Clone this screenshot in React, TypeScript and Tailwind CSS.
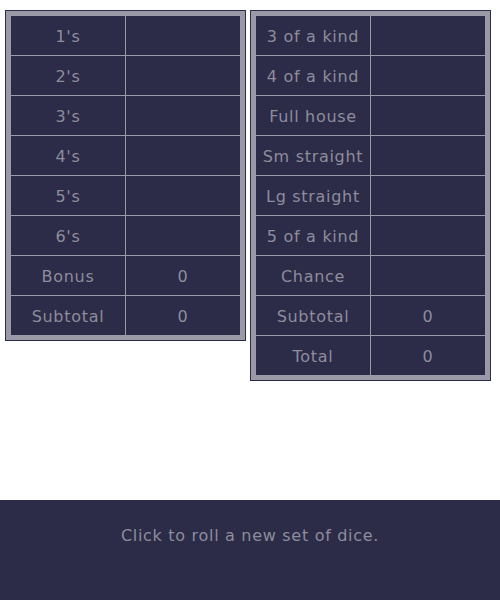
const upper = [
  ["1's", ""],
  ["2's", ""],
  ["3's", ""],
  ["4's", ""],
  ["5's", ""],
  ["6's", ""],
  ["Bonus", "0"],
  ["Subtotal", "0"],
];

const lower = [
  ["3 of a kind", ""],
  ["4 of a kind", ""],
  ["Full house", ""],
  ["Sm straight", ""],
  ["Lg straight", ""],
  ["5 of a kind", ""],
  ["Chance", ""],
  ["Subtotal", "0"],
  ["Total", "0"],
];

function ScoreTable({ rows }: { rows: string[][] }) {
  return (
    <div className="w-[241px] border border-[#2c2b48] bg-[#9a99a6] p-[5px]">
      <div className="grid grid-cols-2 gap-px bg-[#9a99a6]">
        {rows.map(([label, value], i) => (
          <div key={i} className="contents">
            <div className="flex h-[39px] items-center justify-center bg-[#2c2b48] pt-[3px]">{label}</div>
            <div className="flex h-[39px] items-center justify-center bg-[#2c2b48] pt-[3px]">{value}</div>
          </div>
        ))}
      </div>
    </div>
  );
}

export default function App() {
  return (
    <div className="flex h-[600px] w-[500px] flex-col bg-white text-[16px] tracking-[0.7px] text-[#8e8d9c] [font-family:'DejaVu_Sans',sans-serif]">
      <div className="flex items-start gap-[4px] pl-[5px] pt-[10px]">
        <ScoreTable rows={upper} />
        <ScoreTable rows={lower} />
      </div>
      <div className="mt-auto flex h-[100px] justify-center bg-[#2c2b48] pt-[24px]">
        Click to roll a new set of dice.
      </div>
    </div>
  );
}
